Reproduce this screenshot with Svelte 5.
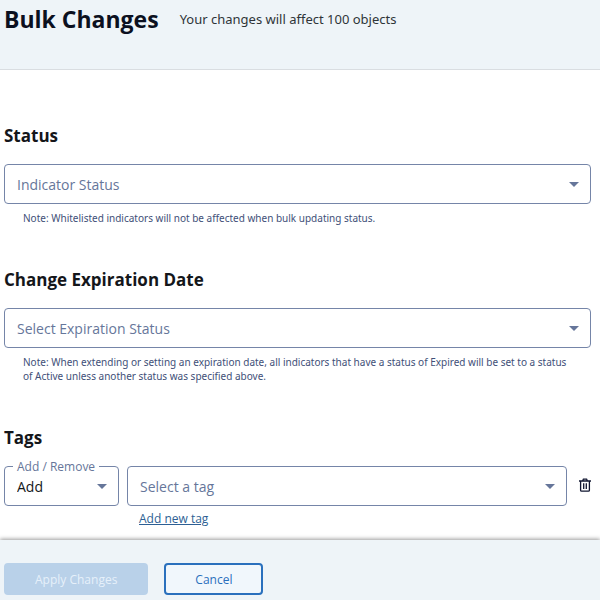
<script lang="ts">
  let status = $state('');
  let expiration = $state('');
  let action = $state('add');
  let tag = $state('');

  const affected = 100;
</script>

{#snippet arrow()}
  <svg class="arrow" viewBox="0 0 10 5" aria-hidden="true">
    <path d="M0 0h10L5 5z" />
  </svg>
{/snippet}

<div class="page">
  <header>
    <h1>Bulk Changes</h1>
    <p>Your changes will affect {affected} objects</p>
  </header>

  <main>
    <section>
      <h2>Status</h2>
      <div class="select-wrapper">
        <select bind:value={status} class:empty={!status} aria-label="Indicator Status">
          <option value="" disabled hidden>Indicator Status</option>
          <option value="active">Active</option>
          <option value="expired">Expired</option>
        </select>
        {@render arrow()}
      </div>
      <p class="note">Note: Whitelisted indicators will not be affected when bulk updating status.</p>
    </section>

    <section>
      <h2>Change Expiration Date</h2>
      <div class="select-wrapper">
        <select bind:value={expiration} class:empty={!expiration} aria-label="Select Expiration Status">
          <option value="" disabled hidden>Select Expiration Status</option>
          <option value="extend">Extend</option>
          <option value="set">Set date</option>
        </select>
        {@render arrow()}
      </div>
      <p class="note">
        Note: When extending or setting an expiration date, all indicators that have a status of Expired will be set to a status of Active unless another status was specified above.
      </p>
    </section>

    <section>
      <h2>Tags</h2>
      <div class="tag-row">
        <div class="select-wrapper action">
          <label for="tag-action">Add / Remove</label>
          <select id="tag-action" bind:value={action}>
            <option value="add">Add</option>
            <option value="remove">Remove</option>
          </select>
          {@render arrow()}
        </div>
        <div class="tag">
          <div class="select-wrapper">
            <select bind:value={tag} class:empty={!tag} aria-label="Select a tag">
              <option value="" disabled hidden>Select a tag</option>
            </select>
            {@render arrow()}
          </div>
          <a href="#new-tag">Add new tag</a>
        </div>
        <button class="delete" type="button" aria-label="Delete tag">
          <svg viewBox="0 0 12 14" aria-hidden="true">
            <path d="M0 3h12M3.6 3l.8-1.9h3.2L8.4 3M1.6 3v9.2q0 1 1 1h6.8q1 0 1-1V3M4.7 5.2v5.8M7.3 5.2v5.8" />
          </svg>
        </button>
      </div>
    </section>
  </main>

  <footer>
    <button class="apply" type="button" disabled>Apply Changes</button>
    <button class="cancel" type="button">Cancel</button>
  </footer>
</div>

<style>
  :global(body) {
    margin: 0;
  }

  .page {
    display: flex;
    flex-direction: column;
    min-height: 100vh;
    background: #fff;
    color: #14161a;
    font-family: 'Open Sans', 'Noto Sans', sans-serif;
  }

  .page * {
    box-sizing: border-box;
  }

  header {
    display: flex;
    align-items: center;
    gap: 21px;
    padding: 3px 4px 34px;
    border-bottom: 1px solid #d9dde1;
    background: #eef4f8;
  }

  h1,
  h2,
  p {
    margin: 0;
  }

  h1 {
    color: #0b1020;
    font-size: 23px;
    font-weight: 700;
    line-height: 32px;
  }

  header p {
    color: #2f3438;
    font-family: 'Noto Sans', sans-serif;
    font-size: 13px;
    line-height: 20px;
  }

  main {
    display: flex;
    flex: 1;
    flex-direction: column;
    gap: 43px;
    padding: 54px 9px 12px 4px;
  }

  h2 {
    margin-bottom: 16px;
    font-size: 17px;
    font-weight: 700;
    line-height: 24px;
  }

  .select-wrapper {
    position: relative;
  }

  select {
    display: block;
    width: 100%;
    height: 40px;
    padding: 0 36px 0 12px;
    border: 1px solid #7585a8;
    border-radius: 4px;
    background: #fff;
    color: #14161a;
    font-family: inherit;
    font-size: 14px;
    appearance: none;
    cursor: pointer;
  }

  select.empty {
    color: #66769a;
  }

  select:focus-visible,
  button:focus-visible {
    outline: 2px solid #2a70bd;
  }

  .arrow {
    position: absolute;
    top: 50%;
    right: 12px;
    width: 10px;
    height: 5px;
    margin-top: -2px;
    fill: #66769a;
    pointer-events: none;
  }

  .note {
    margin: 7px 14px 0 19px;
    color: #414f78;
    font-family: 'Noto Sans', sans-serif;
    font-size: 10px;
    line-height: 14px;
  }

  .tag-row {
    display: flex;
    align-items: flex-start;
    gap: 8px;
  }

  .action {
    flex: 0 0 115px;
  }

  .action label {
    position: absolute;
    top: -7px;
    left: 9px;
    padding: 0 4px;
    background: #fff;
    color: #66769a;
    font-size: 12px;
    line-height: 16px;
  }

  .tag {
    flex: 1;
  }

  .tag a {
    display: inline-block;
    margin: 4px 0 0 12px;
    color: #2d5f94;
    font-size: 12px;
    line-height: 18px;
  }

  .delete {
    display: flex;
    align-items: center;
    height: 38px;
    margin-left: 4px;
    padding: 0;
    border: 0;
    background: none;
    cursor: pointer;
  }

  .delete svg {
    width: 12px;
    height: 14px;
    fill: none;
    stroke: #111631;
    stroke-width: 1.3;
  }

  footer {
    display: flex;
    gap: 16px;
    padding: 23px 4px 5px;
    background: #eef4f8;
    box-shadow: 0 -1px 4px rgba(0, 0, 0, 0.4);
  }

  footer button {
    height: 32px;
    padding: 0 29px;
    border: 2px solid #2a70bd;
    border-radius: 4px;
    font-family: inherit;
    font-size: 12px;
  }

  .apply {
    border-color: #b9d1e9;
    background: #b9d1e9;
    color: #e6f0fa;
  }

  .cancel {
    background: #f1f7fc;
    color: #2a70bd;
    cursor: pointer;
  }
</style>
